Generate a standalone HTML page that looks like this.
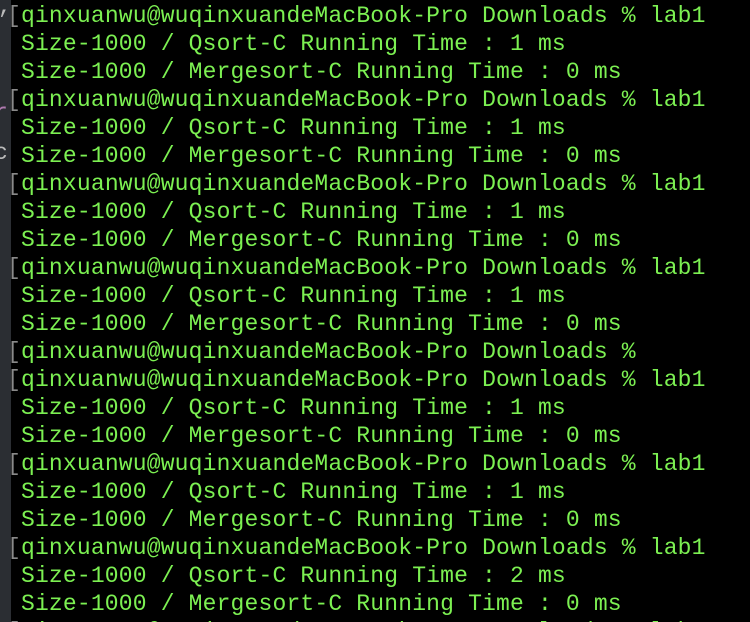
<!DOCTYPE html>
<html><head><meta charset="utf-8"><style>
html,body{margin:0;padding:0;width:750px;height:622px;overflow:hidden;background:#000;position:relative}
.side{position:absolute;left:0;top:0;width:11px;height:622px;background:#2b2e33}
.t{position:absolute;left:7px;top:2px;height:620px;overflow:hidden;font-family:"Liberation Mono",monospace;font-size:23px;line-height:28px;color:#7cf052;white-space:pre;letter-spacing:0.17px}
.b{color:#8a8a8a}
.s{position:absolute;font-family:"Liberation Mono",monospace;font-size:23px;color:#a6a6a6}
</style></head><body>
<div class="side"></div>
<div class="s" style="left:-2px;top:-6px;color:#bbb">,</div>
<div class="s" style="left:-6px;top:100px;color:#b07ab0">r</div>
<div class="s" style="left:-6px;top:140px;color:#bbb">c</div>
<div class="t"><span class="b">[</span>qinxuanwu@wuqinxuandeMacBook-Pro Downloads % lab1
 Size-1000 / Qsort-C Running Time : 1 ms
 Size-1000 / Mergesort-C Running Time : 0 ms
<span class="b">[</span>qinxuanwu@wuqinxuandeMacBook-Pro Downloads % lab1
 Size-1000 / Qsort-C Running Time : 1 ms
 Size-1000 / Mergesort-C Running Time : 0 ms
<span class="b">[</span>qinxuanwu@wuqinxuandeMacBook-Pro Downloads % lab1
 Size-1000 / Qsort-C Running Time : 1 ms
 Size-1000 / Mergesort-C Running Time : 0 ms
<span class="b">[</span>qinxuanwu@wuqinxuandeMacBook-Pro Downloads % lab1
 Size-1000 / Qsort-C Running Time : 1 ms
 Size-1000 / Mergesort-C Running Time : 0 ms
<span class="b">[</span>qinxuanwu@wuqinxuandeMacBook-Pro Downloads %
<span class="b">[</span>qinxuanwu@wuqinxuandeMacBook-Pro Downloads % lab1
 Size-1000 / Qsort-C Running Time : 1 ms
 Size-1000 / Mergesort-C Running Time : 0 ms
<span class="b">[</span>qinxuanwu@wuqinxuandeMacBook-Pro Downloads % lab1
 Size-1000 / Qsort-C Running Time : 1 ms
 Size-1000 / Mergesort-C Running Time : 0 ms
<span class="b">[</span>qinxuanwu@wuqinxuandeMacBook-Pro Downloads % lab1
 Size-1000 / Qsort-C Running Time : 2 ms
 Size-1000 / Mergesort-C Running Time : 0 ms
<span class="b">[</span>qinxuanwu@wuqinxuandeMacBook-Pro Downloads % lab1</div>
</body></html>
